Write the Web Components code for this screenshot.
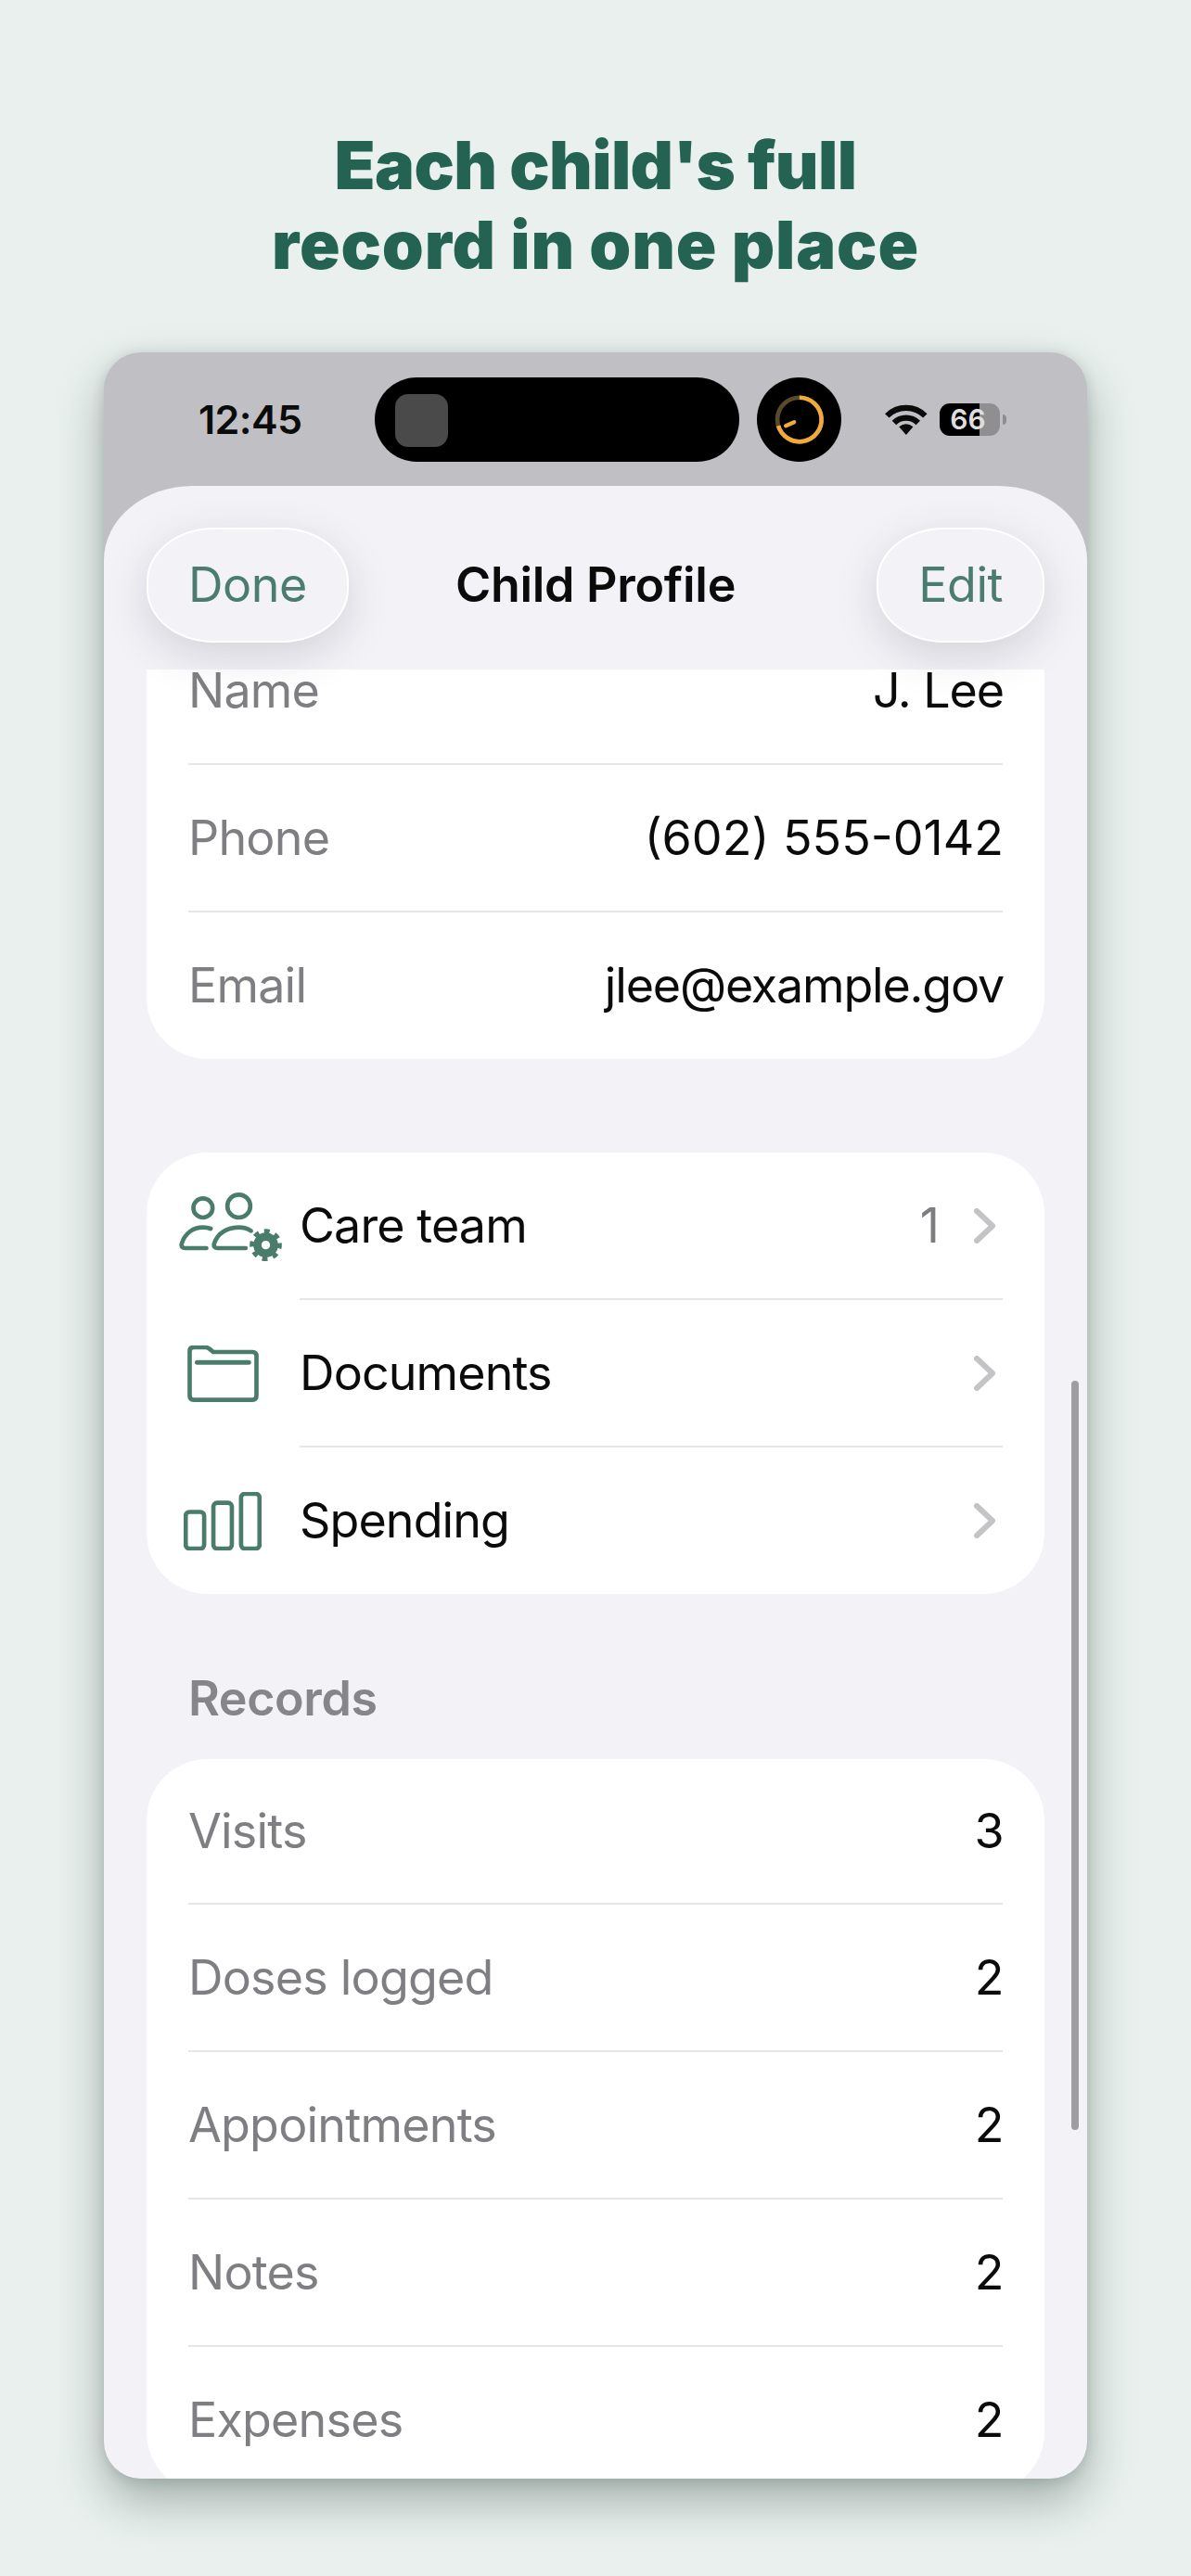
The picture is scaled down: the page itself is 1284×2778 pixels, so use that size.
<!DOCTYPE html>
<html lang="en">
<head>
<meta charset="utf-8">
<title>Child Profile</title>
<style>
html, body { margin: 0; background: #e9f0ed; }
body { font-family: Inter, "Liberation Sans", sans-serif; }
</style>
</head>
<body>
<promo-page>
  <span slot="title"><span style="letter-spacing:-0.6px">Each child's full</span><br><span style="letter-spacing:0.9px">record in one place</span></span>
  <phone-frame>
    <status-bar slot="status" time="12:45" battery="66"></status-bar>
    <profile-sheet slot="sheet">
      <nav-bar slot="nav" heading="Child Profile">
        <pill-button slot="left">Done</pill-button>
        <pill-button slot="right">Edit</pill-button>
      </nav-bar>
      <info-card clipped>
        <info-row label="Name" value="J. Lee" style="--value-spacing:-1.1px"></info-row>
        <info-row label="Phone" value="(602) 555-0142" style="--value-spacing:0px"></info-row>
        <info-row label="Email" value="jlee@example.gov" style="--value-spacing:-1.2px" last></info-row>
      </info-card>
      <info-card spaced>
        <link-row icon="care" label="Care team" count="1"></link-row>
        <link-row icon="folder" label="Documents"></link-row>
        <link-row icon="bars" label="Spending" last></link-row>
      </info-card>
      <section-head>Records</section-head>
      <info-card>
        <info-row label="Visits" value="3" short></info-row>
        <info-row label="Doses logged" value="2"></info-row>
        <info-row label="Appointments" value="2"></info-row>
        <info-row label="Notes" value="2"></info-row>
        <info-row label="Expenses" value="2" last></info-row>
      </info-card>
    </profile-sheet>
  </phone-frame>
</promo-page>

<script>
class PromoPage extends HTMLElement {
  constructor() {
    super();
    this.attachShadow({mode: 'open'});
    this.shadowRoot.innerHTML = `
    <style>
      :host { display: block; height: 2778px; overflow: hidden; background: #e9f0ed; }
      h1 {
        margin: 0;
        padding-top: 135px;
        height: 380px;
        box-sizing: border-box;
        text-align: center;
        font: 900 72px/86px Inter, "Liberation Sans", sans-serif;
        color: #246351;
      }
      .frame { padding: 0 112px; }
    </style>
    <h1><slot name="title"></slot></h1>
    <div class="frame"><slot></slot></div>`;
  }
}

class PhoneFrame extends HTMLElement {
  constructor() {
    super();
    this.attachShadow({mode: 'open'});
    this.shadowRoot.innerHTML = `
    <style>
      :host {
        display: flex;
        flex-direction: column;
        height: 2293px;
        background: #c0c0c4;
        border-radius: 40px;
        box-shadow: 0 24px 50px rgba(40,60,55,.36), 0 2px 14px rgba(40,60,55,.16);
      }
      .clip { display: flex; flex-direction: column; height: 100%; overflow: hidden; border-radius: 40px; }
    </style>
    <div class="clip">
      <slot name="status"></slot>
      <slot name="sheet"></slot>
    </div>`;
  }
}

class StatusBar extends HTMLElement {
  constructor() {
    super();
    this.attachShadow({mode: 'open'});
    this.shadowRoot.innerHTML = `
    <style>
      :host {
        display: flex;
        align-items: center;
        box-sizing: border-box;
        height: 144px;
        padding: 27px 0 26px 102px;
        color: #0b0b0b;
      }
      .time { width: 190px; font: 600 43px/1 Inter, "Liberation Sans", sans-serif; letter-spacing: -0.6px; }
      .island {
        box-sizing: border-box;
        width: 393px; height: 91px;
        padding: 18px 22px;
        background: #000;
        border-radius: 46px;
      }
      .thumb { width: 57px; height: 57px; background: #4a4a4a; border-radius: 14px; }
      .ring { margin-left: 19px; width: 91px; height: 91px; }
      .wifi { margin-left: 46px; width: 48px; height: 35px; }
      .battery {
        position: relative;
        margin-left: 12px;
        width: 65px; height: 35px;
        border-radius: 11px;
        background: linear-gradient(90deg, #000 66%, #8f8f92 66%);
        color: #dedede;
        font: 600 30px/35px Inter, "Liberation Sans", sans-serif;
        text-align: center;
        padding-right: 4px;
        box-sizing: border-box;
      }
      .nub { margin-left: 3px; width: 4px; height: 11px; background: #8f8f92; border-radius: 0 4px 4px 0; }
    </style>
    <div class="time"></div>
    <div class="island"><div class="thumb"></div></div>
    <svg class="ring" viewBox="108 52 272 272">
      <circle cx="244" cy="188" r="136" fill="#000"/>
      <circle cx="245" cy="188" r="71" fill="none" stroke="#5a4a2b" stroke-width="14"/>
      <path d="M245 117A71 71 0 1 1 177 208" fill="none" stroke="#f2a93b" stroke-width="14"/>
      <path d="M201 208L228 196" fill="none" stroke="#f2a93b" stroke-width="13" stroke-linecap="round"/>
    </svg>
    <svg class="wifi" viewBox="515 130 145 105" fill="none" stroke="#0b0b0b" stroke-width="19">
      <path d="M525 170A88 88 0 0 1 649 170"/>
      <path d="M548 193A55 55 0 0 1 626 193"/>
      <path d="M587 232L564 206Q587 188 610 206Z" fill="#0b0b0b" stroke="none"/>
    </svg>
    <div class="battery"></div>
    <div class="nub"></div>`;
    this.shadowRoot.querySelector('.time').innerText = this.getAttribute('time');
    this.shadowRoot.querySelector('.battery').innerText = this.getAttribute('battery');
  }
}

class ProfileSheet extends HTMLElement {
  constructor() {
    super();
    this.attachShadow({mode: 'open'});
    this.shadowRoot.innerHTML = `
    <style>
      :host {
        position: relative;
        display: flex;
        flex-direction: column;
        height: 2149px;
        overflow: hidden;
        background: #f2f2f7;
        border-radius: 96px 96px 0 0 / 80px 80px 0 0;
      }
      .scroll { flex: 1; min-height: 0; overflow: hidden; padding: 0 46px; }
      .inner { margin-top: -56px; }
      .thumb {
        position: absolute;
        top: 965px; right: 9px;
        width: 8px; height: 808px;
        background: #9d9da2;
        border-radius: 4px;
      }
    </style>
    <slot name="nav"></slot>
    <div class="scroll"><div class="inner"><slot></slot></div></div>
    <div class="thumb"></div>`;
  }
}

class NavBar extends HTMLElement {
  constructor() {
    super();
    this.attachShadow({mode: 'open'});
    this.shadowRoot.innerHTML = `
    <style>
      :host {
        position: relative;
        z-index: 2;
        display: grid;
        grid-template-columns: 1fr auto 1fr;
        align-items: center;
        box-sizing: border-box;
        height: 198px;
        padding: 45px 46px 29px;
      }
      .title { font: 600 52px/1 Inter, "Liberation Sans", sans-serif; letter-spacing: -0.3px; color: #0b0b0b; white-space: nowrap; }
      .r { display: flex; justify-content: flex-end; }
      .l { display: flex; }
    </style>
    <div class="l"><slot name="left"></slot></div>
    <div class="title"></div>
    <div class="r"><slot name="right"></slot></div>`;
    this.shadowRoot.querySelector('.title').innerText = this.getAttribute('heading');
  }
}

class PillButton extends HTMLElement {
  constructor() {
    super();
    this.attachShadow({mode: 'open'});
    this.shadowRoot.innerHTML = `
    <style>
      :host {
        display: flex;
        align-items: center;
        box-sizing: border-box;
        height: 124px;
        padding: 0 43px;
        background: #f3f3f7;
        border: 2px solid #fff;
        border-radius: 72px / 58px;
        box-shadow: 0 14px 46px rgba(60,60,80,.17);
        font: 400 52px/1 Inter, "Liberation Sans", sans-serif;
        letter-spacing: -0.5px;
        color: #4b7d6e;
      }
    </style>
    <slot></slot>`;
  }
}

class InfoCard extends HTMLElement {
  constructor() {
    super();
    this.attachShadow({mode: 'open'});
    this.shadowRoot.innerHTML = `
    <style>
      :host {
        display: block;
        background: #fff;
        border-radius: 66px;
      }
      :host([spaced]) { margin-top: 101px; }
      :host([clipped]) { border-radius: 0 0 66px 66px; }
    </style>
    <slot></slot>`;
  }
}

class InfoRow extends HTMLElement {
  constructor() {
    super();
    this.attachShadow({mode: 'open'});
    this.shadowRoot.innerHTML = `
    <style>
      :host {
        display: block;
        padding: 0 45px;
        font: 400 52px/1 Inter, "Liberation Sans", sans-serif;
        letter-spacing: -0.8px;
      }
      .row {
        display: flex;
        justify-content: space-between;
        align-items: center;
        box-sizing: border-box;
        height: 159px;
        border-bottom: 2px solid #e6e6e8;
      }
      :host([short]) .row { height: 157px; }
      :host([last]) .row { border-bottom: 0; height: 158px; }
      .label { color: #7f7f83; }
      .value { color: #0b0b0b; letter-spacing: var(--value-spacing, -0.5px); margin-right: -1px; }
    </style>
    <div class="row"><span class="label"></span><span class="value"></span></div>`;
    this.shadowRoot.querySelector('.label').innerText = this.getAttribute('label');
    this.shadowRoot.querySelector('.value').innerText = this.getAttribute('value');
  }
}

const ROW_ICONS = {
  care: {left: 35, svg: `
    <svg width="111" height="74" viewBox="130 130 332 222" fill="none" stroke="#4a7c6c" stroke-width="14" stroke-linecap="round">
      <circle cx="207" cy="180" r="31"/>
      <circle cx="323" cy="174" r="37"/>
      <path d="M218 310H150Q135 310 138 296C148 262 175 243 207 243Q222 243 232 247"/>
      <path d="M345 310H255Q240 310 243 296C253 262 285 243 323 243C337 243 350 246 362 254"/>
      <circle cx="410" cy="300" r="27" stroke-width="26"/>
      <circle cx="410" cy="300" r="44" stroke-width="16" stroke-dasharray="17 17.56" stroke-linecap="butt" transform="rotate(-8 410 300)"/>
    </svg>`},
  folder: {left: 44, svg: `
    <svg width="77" height="61" viewBox="155 632 230 183" fill="none" stroke="#4a7c6c" stroke-width="14" stroke-linejoin="round">
      <path d="M162 650Q162 638 175 638H212Q220 638 226 643L238 653H365Q378 653 378 666V795Q378 808 365 808H175Q162 808 162 795Z"/>
      <path d="M186 687H353" stroke-width="15" stroke-linecap="round"/>
    </svg>`},
  bars: {left: 40, svg: `
    <svg width="84" height="63" viewBox="145 1105 252 190" fill="none" stroke="#4a7c6c" stroke-width="14">
      <rect x="151" y="1170" width="60" height="119" rx="12"/>
      <rect x="241" y="1140" width="60" height="149" rx="12"/>
      <rect x="331" y="1111" width="60" height="178" rx="12"/>
    </svg>`}
};

class LinkRow extends HTMLElement {
  constructor() {
    super();
    this.attachShadow({mode: 'open'});
    const icon = ROW_ICONS[this.getAttribute('icon')];
    this.shadowRoot.innerHTML = `
    <style>
      :host {
        display: flex;
        align-items: stretch;
        font: 400 52px/1 Inter, "Liberation Sans", sans-serif;
        letter-spacing: -0.9px;
      }
      .icon {
        flex: none;
        display: flex;
        align-items: center;
        box-sizing: border-box;
        width: 165px;
        padding-left: ${icon.left}px;
      }
      .body {
        flex: 1;
        display: flex;
        align-items: center;
        box-sizing: border-box;
        height: 159px;
        margin-right: 45px;
        border-bottom: 2px solid #e6e6e8;
        color: #0b0b0b;
      }
      :host([last]) .body { border-bottom: 0; height: 158px; }
      .label { flex: 1; }
      .count { color: #7d7d80; margin-right: 38px; }
      .chev { margin-right: 7px; }
    </style>
    <div class="icon">${icon.svg}</div>
    <div class="body">
      <span class="label"></span>
      <span class="count"></span>
      <svg class="chev" width="24" height="38" viewBox="0 0 24 38" fill="none" stroke="#c4c4c7" stroke-width="6" stroke-linecap="round" stroke-linejoin="round"><path d="M3 3L20 19L3 35"/></svg>
    </div>`;
    this.shadowRoot.querySelector('.label').innerText = this.getAttribute('label');
    this.shadowRoot.querySelector('.count').innerText = this.getAttribute('count') || '';
  }
}

class SectionHead extends HTMLElement {
  constructor() {
    super();
    this.attachShadow({mode: 'open'});
    this.shadowRoot.innerHTML = `
    <style>
      :host {
        display: flex;
        align-items: flex-start;
        box-sizing: border-box;
        height: 178px;
        padding: 87px 0 0 45px;
        font: 600 52px/52px Inter, "Liberation Sans", sans-serif;
        letter-spacing: -0.4px;
        color: #86868a;
      }
    </style>
    <slot></slot>`;
  }
}

customElements.define('promo-page', PromoPage);
customElements.define('phone-frame', PhoneFrame);
customElements.define('status-bar', StatusBar);
customElements.define('profile-sheet', ProfileSheet);
customElements.define('nav-bar', NavBar);
customElements.define('pill-button', PillButton);
customElements.define('info-card', InfoCard);
customElements.define('info-row', InfoRow);
customElements.define('link-row', LinkRow);
customElements.define('section-head', SectionHead);
</script>
</body>
</html>
